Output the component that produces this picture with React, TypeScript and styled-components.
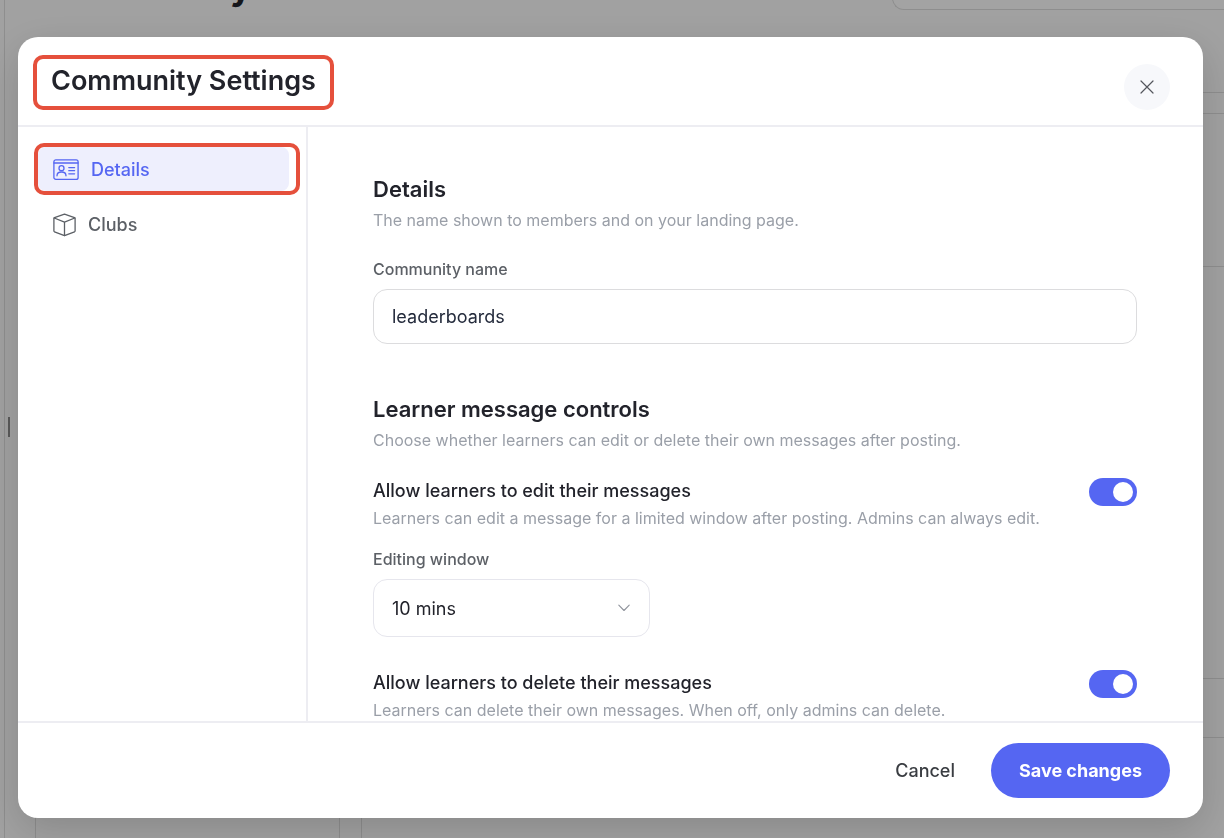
import React, { useId, useState } from "react";
import styled, { createGlobalStyle } from "styled-components";

const GlobalStyle = createGlobalStyle`
  *, *::before, *::after { box-sizing: border-box; }
  body {
    margin: 0;
    background: #fcfcfc;
    color: #22232b;
    font-family: Inter, "Liberation Sans", sans-serif;
    -webkit-font-smoothing: antialiased;
  }
  h1, h2, h3, p { margin: 0; }
  button, input, select { font: inherit; color: inherit; }
`;

const accent = "#5566f2";
const highlight = "#e5503c";
const pageLine = "#dedede";

/* Page behind the dialog */

const Page = styled.div`
  display: grid;
  grid-template-columns: 5px 30px minmax(0, 1fr);
  height: 100vh;
  overflow: hidden;
`;

const Rail = styled.div`
  border-right: 1px solid ${pageLine};
`;

const Gutter = styled.div`
  display: flex;
  align-items: center;
  padding: 16px 0 0 3px;
`;

const Handle = styled.div`
  width: 2px;
  height: 20px;
  background: #8c8c8c;
`;

const Workspace = styled.div`
  display: flex;
  flex-direction: column;
  min-width: 0;
`;

const TopBar = styled.div`
  display: flex;
  justify-content: space-between;
  align-items: flex-end;
  height: 10px;
  padding-left: 12px;
`;

const PageTitle = styled.h2`
  font-size: 36px;
  line-height: 46px;
  font-weight: 700;
`;

const SearchArea = styled.div`
  width: 332px;
  height: 48px;
  border: 1px solid ${pageLine};
  border-right: 0;
  border-radius: 12px 0 0 12px;
  background: #fff;
`;

const Columns = styled.div`
  flex: 1;
  display: grid;
  grid-template-columns: 305px minmax(0, 1fr);
  gap: 21px;
  padding-top: 82px;
`;

const Panel = styled.div`
  border: 1px solid ${pageLine};
  border-bottom: 0;

  &:last-child { border-right: 0; }
`;

const Band = styled.div<{ $height: number }>`
  height: ${(p) => p.$height}px;
  border-bottom: 1px solid ${pageLine};
`;

/* Dialog */

const Overlay = styled.div`
  position: fixed;
  inset: 0;
  display: flex;
  padding: 37px 21px 20px 18px;
  background: rgba(0, 0, 0, 0.36);
`;

const Dialog = styled.section`
  flex: 1;
  min-width: 0;
  display: flex;
  flex-direction: column;
  overflow: hidden;
  border-radius: 20px;
  background: #fff;
  box-shadow: 0 12px 40px rgba(0, 0, 0, 0.16);
`;

const Header = styled.header`
  display: flex;
  justify-content: space-between;
  align-items: flex-start;
  padding: 18px 33px 15px 15px;
  border-bottom: 2px solid #ededf2;
`;

const TitleFrame = styled.div`
  padding: 6px 14px 9px;
  border: 4px solid ${highlight};
  border-radius: 10px;
`;

const Title = styled.h1`
  font-size: 27px;
  line-height: 32px;
  font-weight: 600;
`;

const CloseButton = styled.button`
  display: grid;
  place-items: center;
  width: 46px;
  height: 46px;
  margin-top: 9px;
  padding: 0;
  border: 0;
  border-radius: 50%;
  background: #f7f8fb;
  color: #54565d;
  cursor: pointer;
`;

const Body = styled.div`
  flex: 1;
  min-height: 0;
  display: flex;
`;

const Sidebar = styled.nav`
  flex: none;
  width: 290px;
  display: flex;
  flex-direction: column;
  gap: 11px;
  padding: 20px 17px 20px 20px;
  border-right: 2px solid #ededf2;
`;

const NavItem = styled.button<{ $active?: boolean }>`
  position: relative;
  display: flex;
  align-items: center;
  gap: 12px;
  height: 44px;
  padding: 1px 15px 0;
  border: 0;
  border-radius: 8px;
  background: ${(p) => (p.$active ? "#eeeffd" : "transparent")};
  color: ${(p) => (p.$active ? accent : "#5c6066")};
  font-size: 18px;
  line-height: 24px;
  font-weight: 500;
  cursor: pointer;

  &::after {
    content: "";
    display: ${(p) => (p.$active ? "block" : "none")};
    position: absolute;
    inset: -4px -11px -4px -4px;
    border: 4px solid ${highlight};
    border-radius: 10px;
  }
`;

const Content = styled.main`
  flex: 1;
  min-width: 0;
  padding: 48px 66px 48px 65px;
  overflow-y: auto;
  scrollbar-width: none;
`;

const Section = styled.section`
  & + & { margin-top: 51px; }
`;

const SectionTitle = styled.h2`
  font-size: 22px;
  line-height: 28px;
  font-weight: 600;
`;

const Hint = styled.p`
  margin-top: 5px;
  font-size: 16px;
  line-height: 24px;
  color: #9a9fa8;
`;

const Field = styled.div<{ $gap: number }>`
  display: flex;
  flex-direction: column;
  gap: 10px;
  margin-top: ${(p) => p.$gap}px;
`;

const Label = styled.label`
  font-size: 16px;
  line-height: 20px;
  font-weight: 500;
  color: #5c6066;
`;

const TextInput = styled.input`
  width: 100%;
  height: 55px;
  padding: 0 18px;
  border: 1px solid #dcdcde;
  border-radius: 14px;
  background: #fff;
  color: #232a3b;
  font-size: 18px;
`;

const SelectBox = styled.div`
  position: relative;
  width: 277px;
  max-width: 100%;
`;

const Select = styled.select`
  appearance: none;
  width: 100%;
  height: 58px;
  padding: 0 48px 0 18px;
  border: 1px solid #e6e6ed;
  border-radius: 14px;
  background: #fff;
  font-size: 18px;
`;

const SelectArrow = styled.svg`
  position: absolute;
  top: 0;
  bottom: 0;
  right: 20px;
  margin: auto 0;
  pointer-events: none;
`;

const Setting = styled.div<{ $gap: number }>`
  display: flex;
  justify-content: space-between;
  align-items: flex-start;
  gap: 24px;
  margin-top: ${(p) => p.$gap}px;
`;

const SettingName = styled.label`
  display: block;
  font-size: 18px;
  line-height: 26px;
  font-weight: 500;

  & + ${Hint} { margin-top: 2px; }
`;

const Switch = styled.input`
  appearance: none;
  flex: none;
  display: flex;
  align-items: center;
  width: 48px;
  height: 28px;
  margin: 0;
  padding: 0 4px;
  border-radius: 14px;
  background: #d3d5dc;
  cursor: pointer;

  &::before {
    content: "";
    width: 20px;
    height: 20px;
    border-radius: 50%;
    background: #fff;
  }

  &:checked {
    justify-content: flex-end;
    background: ${accent};
  }
`;

const Footer = styled.footer`
  display: flex;
  justify-content: flex-end;
  align-items: center;
  gap: 24px;
  padding: 20px 33px;
  border-top: 2px solid #ededf2;
`;

const Action = styled.button<{ $primary?: boolean }>`
  height: 55px;
  padding: 0 ${(p) => (p.$primary ? 28 : 12)}px;
  border: 0;
  border-radius: 28px;
  background: ${(p) => (p.$primary ? accent : "transparent")};
  color: ${(p) => (p.$primary ? "#fff" : "#3a3d42")};
  font-size: 18px;
  font-weight: ${(p) => (p.$primary ? 700 : 500)};
  cursor: pointer;
`;

const CardIcon = () => (
  <svg width="26" height="22" viewBox="0 0 26 22" fill="none" stroke="currentColor" strokeWidth="1.3" strokeLinecap="round" strokeLinejoin="round" aria-hidden="true">
    <rect x="0.9" y="0.8" width="24.2" height="19.6" rx="2" />
    <path d="M1 4h24" />
    <circle cx="8.5" cy="9.2" r="2.5" />
    <path d="M4 16.8c0-2.4 1.9-3.8 4.5-3.8s4.5 1.4 4.5 3.8M15.8 8.600h5.800M15.800 11.700h5.800M15.800 14.800h5.800" />
  </svg>
);

const CubeIcon = () => (
  <svg width="23" height="24" viewBox="0 0 23 24" fill="none" stroke="currentColor" strokeWidth="1.3" strokeLinecap="round" strokeLinejoin="round" aria-hidden="true">
    <path d="M11.5 1.2 21.5 4.6a.9.9 0 0 1 .6.8v12.6a.9.9 0 0 1-.6.8l-10 3.9-10-3.9a.9.9 0 0 1-.6-.8V5.4a.9.9 0 0 1 .6-.8z" />
    <path d="M1.2 5 11.5 9.2 21.8 5M11.5 9.2v13.3" />
  </svg>
);

export default function App() {
  const id = useId();
  const [name, setName] = useState("leaderboards");
  const [canEdit, setCanEdit] = useState(true);
  const [canDelete, setCanDelete] = useState(true);

  return (
    <>
      <GlobalStyle />
      <Page aria-hidden="true">
        <Rail />
        <Gutter>
          <Handle />
        </Gutter>
        <Workspace>
          <TopBar>
            <PageTitle>Community</PageTitle>
            <SearchArea />
          </TopBar>
          <Columns>
            <Panel />
            <Panel>
              <Band $height={21} />
              <Band $height={153} />
              <Band $height={412} />
              <Band $height={59} />
            </Panel>
          </Columns>
        </Workspace>
      </Page>
      <Overlay>
        <Dialog role="dialog" aria-modal="true" aria-labelledby={`${id}-title`}>
          <Header>
            <TitleFrame>
              <Title id={`${id}-title`}>Community Settings</Title>
            </TitleFrame>
            <CloseButton type="button" aria-label="Close">
              <svg width="14" height="14" viewBox="0 0 14 14" fill="none" stroke="currentColor" strokeWidth="1.2" strokeLinecap="round" aria-hidden="true">
                <path d="M1 1l12 12M13 1L1 13" />
              </svg>
            </CloseButton>
          </Header>
          <Body>
            <Sidebar aria-label="Settings sections">
              <NavItem type="button" $active aria-current="page">
                <CardIcon />
                Details
              </NavItem>
              <NavItem type="button">
                <CubeIcon />
                Clubs
              </NavItem>
            </Sidebar>
            <Content>
              <Section>
                <SectionTitle>Details</SectionTitle>
                <Hint>The name shown to members and on your landing page.</Hint>
                <Field $gap={27}>
                  <Label htmlFor={`${id}-name`}>Community name</Label>
                  <TextInput id={`${id}-name`} type="text" value={name} onChange={(e) => setName(e.target.value)} />
                </Field>
              </Section>
              <Section>
                <SectionTitle>Learner message controls</SectionTitle>
                <Hint>Choose whether learners can edit or delete their own messages after posting.</Hint>
                <Setting $gap={26}>
                  <div>
                    <SettingName htmlFor={`${id}-edit`}>Allow learners to edit their messages</SettingName>
                    <Hint>Learners can edit a message for a limited window after posting. Admins can always edit.</Hint>
                  </div>
                  <Switch id={`${id}-edit`} type="checkbox" role="switch" checked={canEdit} onChange={(e) => setCanEdit(e.target.checked)} />
                </Setting>
                <Field $gap={19}>
                  <Label htmlFor={`${id}-window`}>Editing window</Label>
                  <SelectBox>
                    <Select id={`${id}-window`} defaultValue="10">
                      <option value="10">10 mins</option>
                    </Select>
                    <SelectArrow width="12" height="8" viewBox="0 0 12 8" fill="none" stroke="#8f939c" strokeWidth="1.1" strokeLinecap="round" strokeLinejoin="round" aria-hidden="true">
                      <path d="M0.8 1.2 6 6.5l5.2-5.3" />
                    </SelectArrow>
                  </SelectBox>
                </Field>
                <Setting $gap={33}>
                  <div>
                    <SettingName htmlFor={`${id}-delete`}>Allow learners to delete their messages</SettingName>
                    <Hint>Learners can delete their own messages. When off, only admins can delete.</Hint>
                  </div>
                  <Switch id={`${id}-delete`} type="checkbox" role="switch" checked={canDelete} onChange={(e) => setCanDelete(e.target.checked)} />
                </Setting>
              </Section>
            </Content>
          </Body>
          <Footer>
            <Action type="button">Cancel</Action>
            <Action type="button" $primary>
              Save changes
            </Action>
          </Footer>
        </Dialog>
      </Overlay>
    </>
  );
}
